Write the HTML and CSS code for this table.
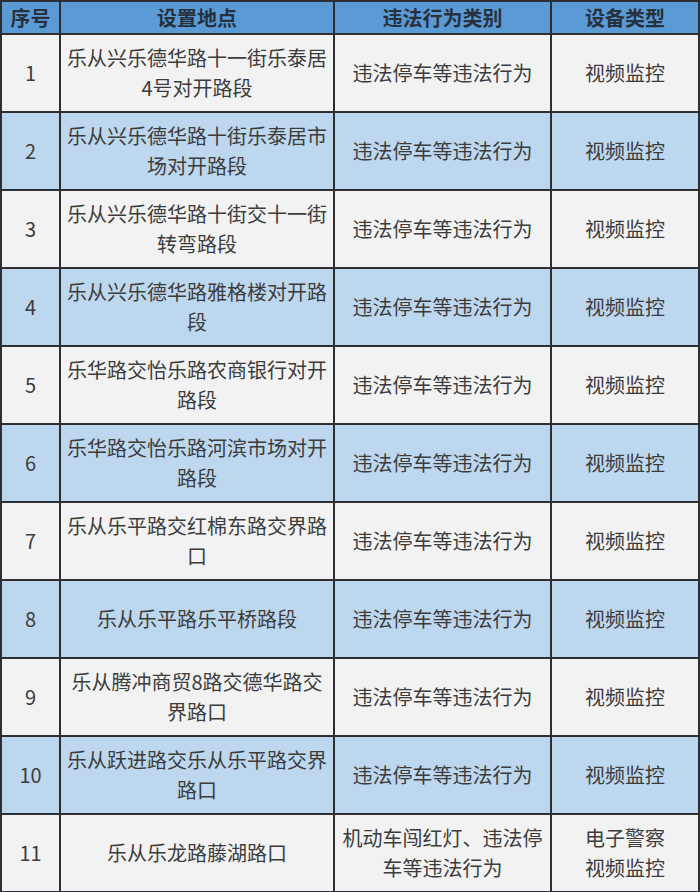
FILE: index.html
```html
<!DOCTYPE html>
<html lang="zh">
<head>
<meta charset="utf-8">
<link rel="stylesheet" href="styles.css">
</head>
<body>
<table class="grid">
  <colgroup>
    <col class="c1"><col class="c2"><col class="c3"><col class="c4">
  </colgroup>
  <thead>
    <tr class="head"><th>序号</th><th>设置地点</th><th>违法行为类别</th><th>设备类型</th></tr>
  </thead>
  <tbody>
    <tr class="odd"><td>1</td><td>乐从兴乐德华路十一街乐泰居4号对开路段</td><td>违法停车等违法行为</td><td>视频监控</td></tr>
    <tr class="even"><td>2</td><td>乐从兴乐德华路十街乐泰居市场对开路段</td><td>违法停车等违法行为</td><td>视频监控</td></tr>
    <tr class="odd"><td>3</td><td>乐从兴乐德华路十街交十一街转弯路段</td><td>违法停车等违法行为</td><td>视频监控</td></tr>
    <tr class="even"><td>4</td><td>乐从兴乐德华路雅格楼对开路段</td><td>违法停车等违法行为</td><td>视频监控</td></tr>
    <tr class="odd"><td>5</td><td>乐华路交怡乐路农商银行对开路段</td><td>违法停车等违法行为</td><td>视频监控</td></tr>
    <tr class="even"><td>6</td><td>乐华路交怡乐路河滨市场对开路段</td><td>违法停车等违法行为</td><td>视频监控</td></tr>
    <tr class="odd"><td>7</td><td>乐从乐平路交红棉东路交界路口</td><td>违法停车等违法行为</td><td>视频监控</td></tr>
    <tr class="even"><td>8</td><td>乐从乐平路乐平桥路段</td><td>违法停车等违法行为</td><td>视频监控</td></tr>
    <tr class="odd"><td>9</td><td>乐从腾冲商贸8路交德华路交界路口</td><td>违法停车等违法行为</td><td>视频监控</td></tr>
    <tr class="even"><td>10</td><td>乐从跃进路交乐从乐平路交界路口</td><td>违法停车等违法行为</td><td>视频监控</td></tr>
    <tr class="odd"><td>11</td><td>乐从乐龙路藤湖路口</td><td>机动车闯红灯、违法停车等违法行为</td><td>电子警察<br>视频监控</td></tr>
  </tbody>
</table>
</body>
</html>
```

FILE: styles.css
```css
html, body {
  margin: 0;
  padding: 0;
  background: #ffffff;
}
.grid {
  border-collapse: collapse;
  table-layout: fixed;
  width: 698px;
  font-family: "Microsoft YaHei", "Noto Sans CJK SC", "Noto Sans", sans-serif;
  font-size: 20px;
  color: #3c3c3c;
}
.c1 { width: 59px; }
.c2 { width: 274px; }
.c3 { width: 217px; }
.c4 { width: 148px; }
.grid th, .grid td {
  border: 2px solid #2e2e33;
  text-align: center;
  vertical-align: middle;
  padding: 0 4px;
  line-height: 30px;
}
.grid th {
  background: #5b9bd5;
  color: #27313d;
  font-weight: bold;
  font-size: 20px;
  height: 31px;
  padding: 0 2px;
  line-height: 28px;
}
.grid td {
  height: 76px;
}
.odd td { background: #f2f2f2; }
.even td { background: #bdd7ee; }
```
